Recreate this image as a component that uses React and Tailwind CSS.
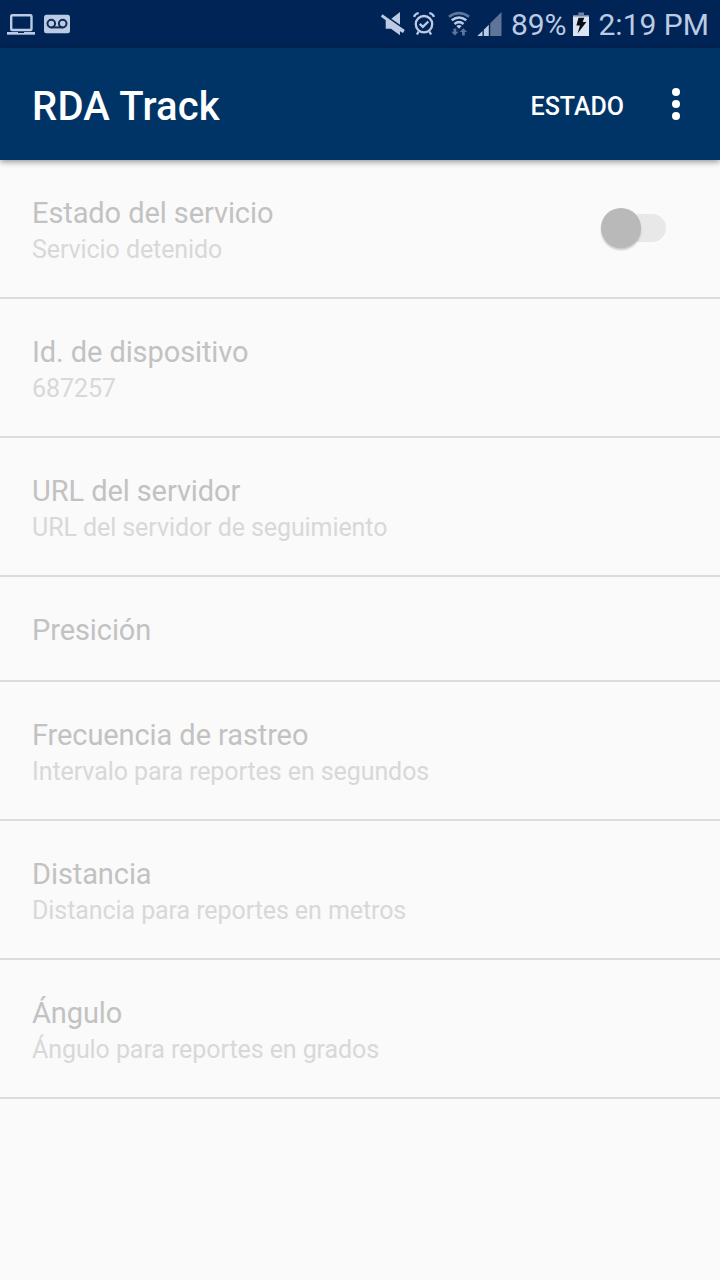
const settings = [
  { title: 'Estado del servicio', summary: 'Servicio detenido', toggle: true },
  { title: 'Id. de dispositivo', summary: '687257' },
  { title: 'URL del servidor', summary: 'URL del servidor de seguimiento' },
  { title: 'Presición' },
  { title: 'Frecuencia de rastreo', summary: 'Intervalo para reportes en segundos' },
  { title: 'Distancia', summary: 'Distancia para reportes en metros' },
  { title: 'Ángulo', summary: 'Ángulo para reportes en grados' },
]

function StatusBar() {
  return (
    <div className="flex h-12 items-start bg-[#002456] text-[#bccbe3]">
      <svg className="ml-[7px] h-12 w-7" viewBox="7 0 28 48" fill="none">
        <rect x="11.2" y="15.2" width="20.3" height="14.8" rx="1" stroke="currentColor" strokeWidth="2.4" />
        <path d="M7 32h28v2.7H7z" fill="currentColor" />
        <path d="M18 32h6v1h-6z" fill="#002456" />
      </svg>
      <svg className="ml-[9px] h-12 w-[26px]" viewBox="44 0 26 48" fill="none">
        <rect x="44" y="14.7" width="26" height="18.6" rx="2.5" fill="currentColor" />
        <g stroke="#102b59" strokeWidth="2">
          <circle cx="51.3" cy="23.6" r="3.8" />
          <circle cx="62.7" cy="23.6" r="3.8" />
          <path d="M51.3 27.4h11.4" />
        </g>
      </svg>
      <svg className="ml-[311px] h-12 w-6" viewBox="381 0 24 48" fill="currentColor">
        <path d="M391.3 18.8L400 12v12.7z" />
        <path d="M382.4 14.2l22.4 15.8-1.8 3-3-1.8v4L391 28.8h-5.3v-8.6l-4.9-3.5z" />
      </svg>
      <svg className="ml-[7.5px] h-12 w-[22px]" viewBox="412.5 0 22 48" fill="none" stroke="currentColor" strokeWidth="2.3">
        <circle cx="423.5" cy="24.2" r="8.2" />
        <path d="M419.2 23.8l3.2 3.1 5.4-5.4" />
        <path d="M413.5 16.8q1.2-3 4.7-3.8M433.5 16.8q-1.2-3-4.7-3.8M418.2 31.5l-1.8 3M428.8 31.5l1.8 3" />
      </svg>
      <svg className="ml-[13px] h-12 w-[22px]" viewBox="447.5 0 22 48" fill="none" strokeWidth="2.5">
        <path d="M448.4 16.8q10.1-7.4 20.2 0" stroke="#5e7599" />
        <path d="M451.2 20.3q7.3-5.6 14.6 0M454 23.9q4.5-3.6 9 0" stroke="currentColor" />
        <path d="M455.8 26q2.7-1.8 5.4 0l-2.7 2.7z" fill="currentColor" />
        <path d="M453 28.5h2.8v3.2h2.2l-3.6 3.8-3.6-3.8h2.2zM461.5 35.5h2.8v-3.4h2.2l-3.6-3.9-3.6 3.9h2.2z" fill="#5e7599" />
      </svg>
      <svg className="ml-[7px] h-12 w-[25px]" viewBox="476.5 0 25 48">
        <path d="M476.8 36L482 30.9V36zM483.3 36v-6.3l5-5V36z" fill="currentColor" />
        <path d="M489.7 36V23.3L501 12v24z" fill="#5e7599" />
      </svg>
      <span className="ml-[9.5px] w-[56px] whitespace-nowrap text-[30px] leading-[50px] tracking-[-0.1px]">89%</span>
      <svg className="ml-[5.5px] h-12 w-4" viewBox="573 0 16 48">
        <path d="M578.3 12.5h5.7v2.5h5v2h-16v-2h5.3z" fill="#6b80a4" />
        <path d="M573 16.5h16V36h-16z" fill="#dce4f2" />
        <path d="M578.5 17.8h5.8l-1.6 4.2h3.7l-8.8 11.5 2.3-8h-3.5z" fill="#0a0d14" />
      </svg>
      <span className="ml-[10px] whitespace-nowrap text-[30px] leading-[50px]">2:19 PM</span>
    </div>
  )
}

function AppBar() {
  return (
    <header className="relative flex h-28 items-center bg-[#003466] pl-8 text-white shadow-[0_2px_6px_rgba(0,0,0,0.4)]">
      <h1 className="flex-1 pt-1.5 text-[40px] font-medium leading-[48px] tracking-[0.2px]">RDA Track</h1>
      <button className="pt-[5px] text-[25px] font-medium leading-8">ESTADO</button>
      <button className="ml-12 mr-10 flex flex-col gap-1">
        <span className="size-2 rounded-full bg-white" />
        <span className="size-2 rounded-full bg-white" />
        <span className="size-2 rounded-full bg-white" />
      </button>
    </header>
  )
}

function Toggle() {
  return (
    <div className="mb-0.5 mr-[54px] flex h-7 w-[62px] items-center rounded-full bg-[#e8e8e8]">
      <span className="-ml-[3px] size-10 rounded-full bg-[#b9b9b9] shadow-[0_2px_2px_rgba(0,0,0,0.2)]" />
    </div>
  )
}

export default function App() {
  return (
    <div className="min-h-screen bg-[#fafafa] font-[Roboto,sans-serif]">
      <StatusBar />
      <AppBar />
      <main>
        {settings.map((item) => (
          <div key={item.title} className="flex items-center justify-between border-b-2 border-[#dcdcdc] pl-8">
            <div className="pb-[31px] pt-[34px]">
              <div className="text-[29px] leading-[38px] tracking-[-0.09px] text-[#c2c2c2]">{item.title}</div>
              {item.summary && (
                <div className="-mb-px mt-px text-[25px] leading-[34px] tracking-[-0.08px] text-[#d8d8d8]">{item.summary}</div>
              )}
            </div>
            {item.toggle && <Toggle />}
          </div>
        ))}
      </main>
    </div>
  )
}
